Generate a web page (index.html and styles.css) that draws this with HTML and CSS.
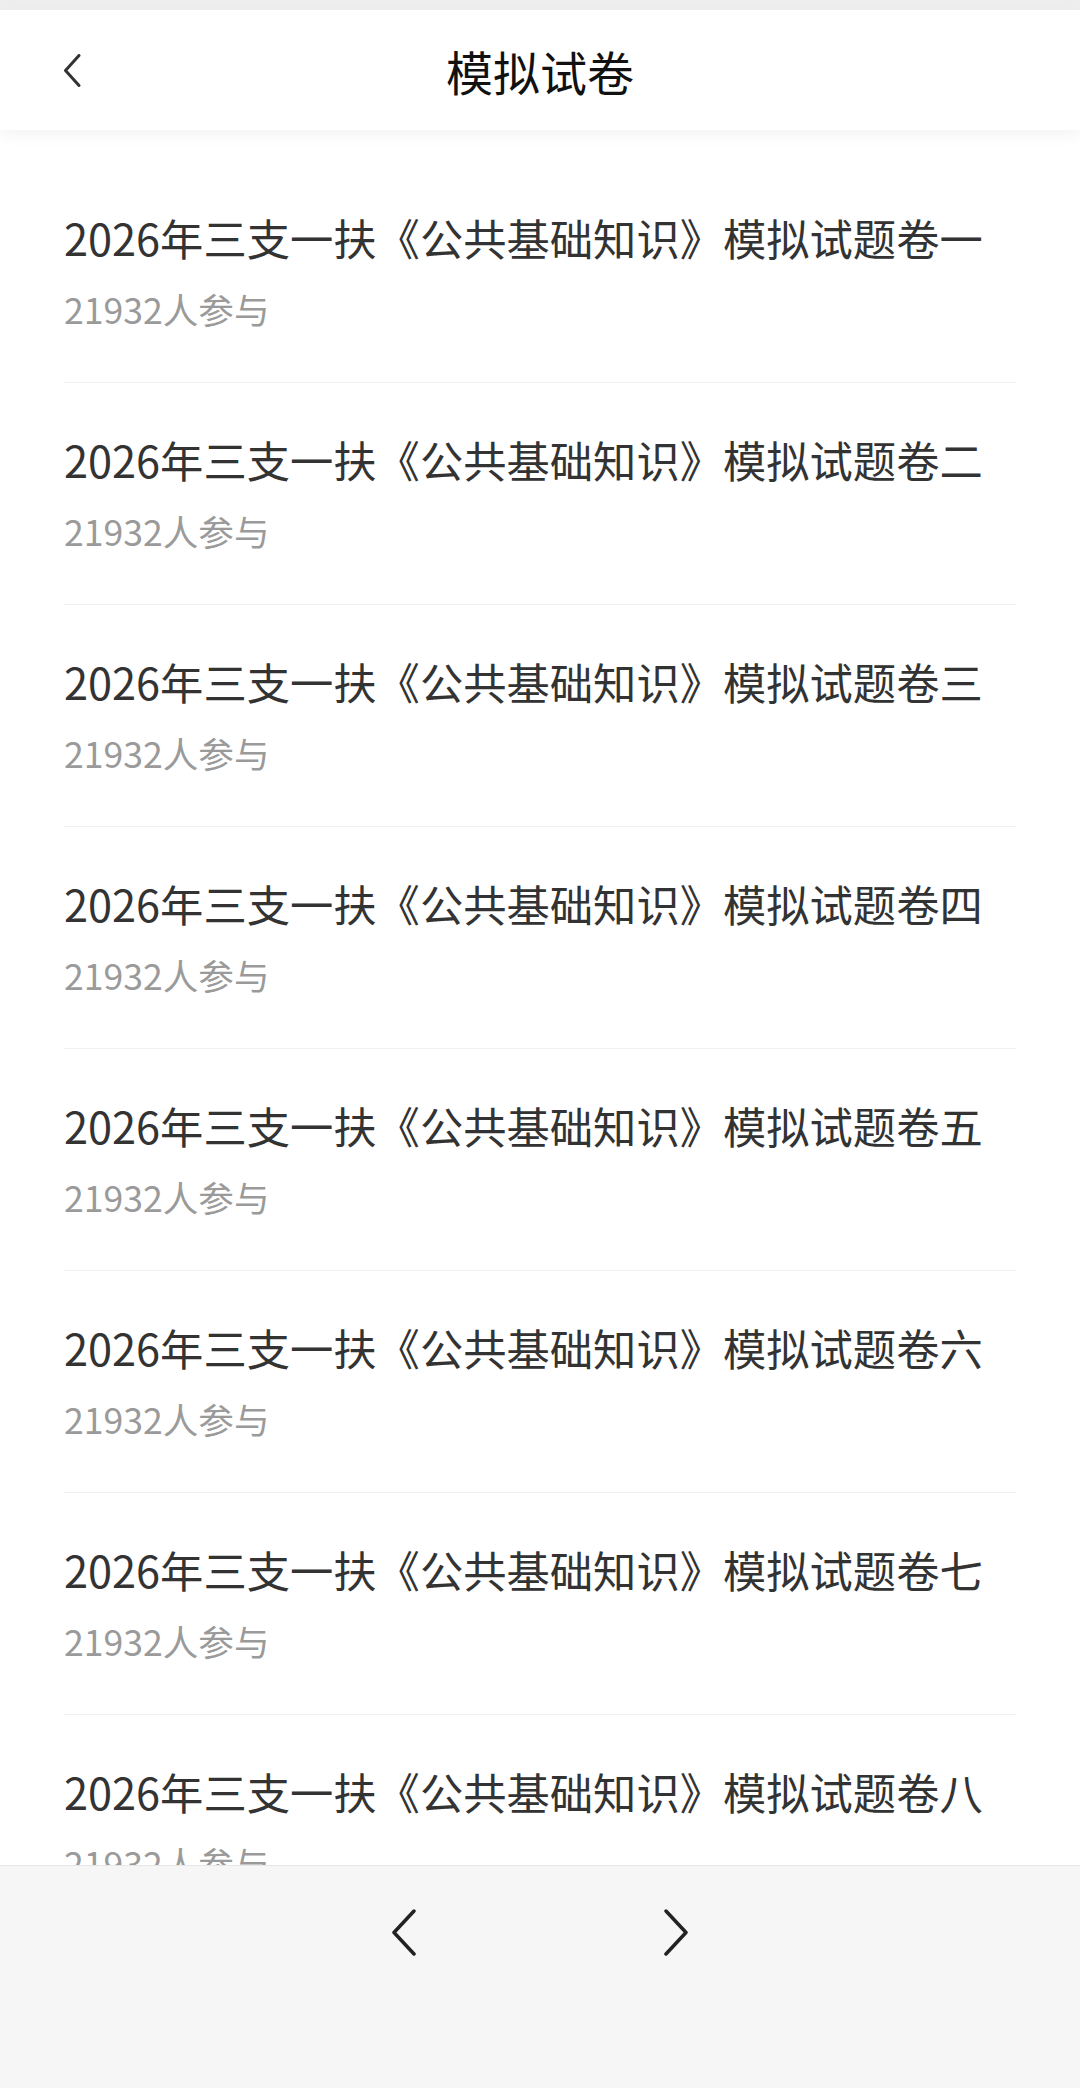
FILE: index.html
```html
<!DOCTYPE html>
<html lang="zh-CN">
<head>
    <meta charset="UTF-8">
    <meta name="viewport" content="width=device-width, initial-scale=1.0">
    <title>模拟试卷</title>
    <link rel="stylesheet" href="styles.css">
</head>
<body>
    <div class="status-strip"></div>

    <header class="top-bar">
        <a class="back" href="#">
            <svg width="18" height="33" viewBox="0 0 18 33">
                <polyline points="16,1.5 2.5,16.5 16,31.5" fill="none" stroke="#333" stroke-width="3" stroke-linecap="round" stroke-linejoin="round"/>
            </svg>
        </a>
        <h1>模拟试卷</h1>
    </header>

    <ul class="paper-list">
        <li class="paper">
            <p class="paper-title">2026年三支一扶《公共基础知识》模拟试题卷一</p>
            <p class="paper-count">21932人参与</p>
        </li>
        <li class="paper">
            <p class="paper-title">2026年三支一扶《公共基础知识》模拟试题卷二</p>
            <p class="paper-count">21932人参与</p>
        </li>
        <li class="paper">
            <p class="paper-title">2026年三支一扶《公共基础知识》模拟试题卷三</p>
            <p class="paper-count">21932人参与</p>
        </li>
        <li class="paper">
            <p class="paper-title">2026年三支一扶《公共基础知识》模拟试题卷四</p>
            <p class="paper-count">21932人参与</p>
        </li>
        <li class="paper">
            <p class="paper-title">2026年三支一扶《公共基础知识》模拟试题卷五</p>
            <p class="paper-count">21932人参与</p>
        </li>
        <li class="paper">
            <p class="paper-title">2026年三支一扶《公共基础知识》模拟试题卷六</p>
            <p class="paper-count">21932人参与</p>
        </li>
        <li class="paper">
            <p class="paper-title">2026年三支一扶《公共基础知识》模拟试题卷七</p>
            <p class="paper-count">21932人参与</p>
        </li>
        <li class="paper">
            <p class="paper-title">2026年三支一扶《公共基础知识》模拟试题卷八</p>
            <p class="paper-count">21932人参与</p>
        </li>
    </ul>

    <nav class="pager">
        <a class="pager-btn" href="#">
            <svg width="26" height="47" viewBox="0 0 26 47">
                <polyline points="23,2 3,23.5 23,45" fill="none" stroke="#222" stroke-width="3.5" stroke-linecap="round" stroke-linejoin="round"/>
            </svg>
        </a>
        <a class="pager-btn" href="#">
            <svg width="26" height="47" viewBox="0 0 26 47">
                <polyline points="3,2 23,23.5 3,45" fill="none" stroke="#222" stroke-width="3.5" stroke-linecap="round" stroke-linejoin="round"/>
            </svg>
        </a>
    </nav>
</body>
</html>
```

FILE: styles.css
```css
body {
    font-family: "Noto Sans CJK SC", "Noto Sans", sans-serif;
    background-color: #fff;
    color: #333;
    margin: 0;
    padding: 0;
}

.status-strip {
    height: 10px;
    background-color: #eeeeee;
}

.top-bar {
    position: relative;
    height: 120px;
    display: flex;
    align-items: center;
    justify-content: center;
    background-color: #fff;
    box-shadow: 0 6px 14px rgba(0, 0, 0, 0.045);
}

.top-bar h1 {
    margin: 0;
    font-size: 47px;
    font-weight: 400;
    color: #111;
}

.back {
    position: absolute;
    left: 63px;
    top: 44px;
    display: flex;
}

.paper-list {
    list-style: none;
    margin: 0;
    padding: 31px 0 0;
}

.paper {
    margin: 0 64px 0 64px;
    padding: 48px 0 50px;
    border-bottom: 1px solid #f1f1f1;
}

.paper p {
    margin: 0;
}

.paper-title {
    font-size: 43.3px;
    line-height: 56px;
    color: #333;
    white-space: nowrap;
}

.paper-count {
    margin-top: 21px !important;
    font-size: 35.6px;
    line-height: 46px;
    color: #9a9a9a;
}

.pager {
    position: fixed;
    left: 0;
    right: 0;
    bottom: 0;
    height: 223px;
    display: flex;
    justify-content: center;
    gap: 246px;
    padding-top: 43px;
    box-sizing: border-box;
    background-color: #f6f6f6;
    border-top: 1px solid #e6e6e6;
}

.pager-btn {
    display: flex;
    height: 47px;
}
```
